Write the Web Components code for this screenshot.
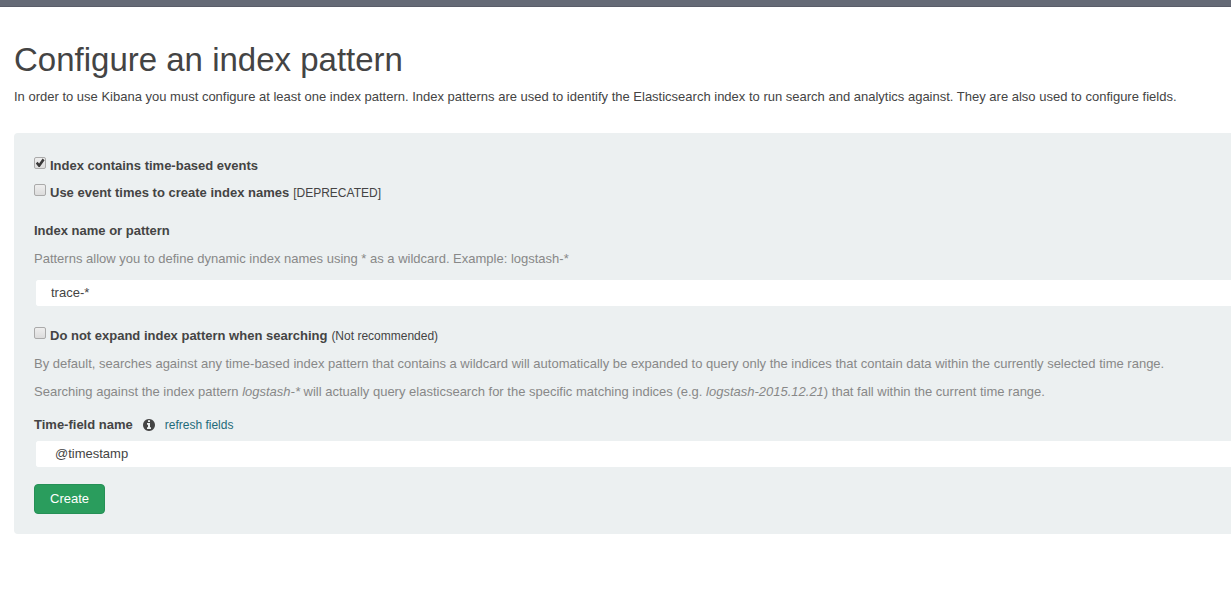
<!DOCTYPE html>
<html lang="en">
<head>
<meta charset="utf-8">
<meta name="viewport" content="width=device-width, initial-scale=1">
<title>Configure an index pattern</title>
<style>
  body { margin: 0; background: #fff; color: #444; font: 13px/18px "Liberation Sans", Arial, sans-serif; }
</style>
</head>
<body>
<index-page></index-page>

<template id="index-page">
  <style>
    :host { display: block; }
    .bar { height: 6px; background: #656a76; border-bottom: 1px solid #5a5d69; }
    main { padding: 32px 0 64px 14px; }
    h1 { margin: 0 0 7px; font-size: 33px; line-height: 42px; font-weight: 400; }
    .intro { margin: 0 0 27px; }
    form { display: flex; flex-direction: column; align-items: stretch; padding: 24px 0 20px 20px; background: #ecf0f1; border-radius: 4px 0 0 4px; }
    .checks { display: flex; flex-direction: column; gap: 9px; margin-bottom: 20px; }
    .expand { margin: 19px 0 15px; display: flex; flex-direction: column; gap: 10px; }
    button { align-self: flex-start; margin: 15px 0 0; height: 30px; padding: 0 15px; border: 1px solid #259056; border-radius: 4px; background: #2a9d5d; color: #fff; font: inherit; }
  </style>
  <header class="bar"></header>
  <main>
    <h1>Configure an index pattern</h1>
    <p class="intro">In order to use Kibana you must configure at least one index pattern. Index patterns are used to identify the Elasticsearch index to run search and analytics against. They are also used to configure fields.</p>
    <form>
      <div class="checks">
        <check-field checked>Index contains time-based events</check-field>
        <check-field>Use event times to create index names<span slot="note">[DEPRECATED]</span></check-field>
      </div>
      <text-field label="Index name or pattern" value="trace-*">
        <help-text>Patterns allow you to define dynamic index names using * as a wildcard. Example: logstash-*</help-text>
      </text-field>
      <div class="expand">
        <check-field>Do not expand index pattern when searching<span slot="note">(Not recommended)</span></check-field>
        <help-text>By default, searches against any time-based index pattern that contains a wildcard will automatically be expanded to query only the indices that contain data within the currently selected time range.</help-text>
        <help-text>Searching against the index pattern <em>logstash-*</em> will actually query elasticsearch for the specific matching indices (e.g. <em>logstash-2015.12.21</em>) that fall within the current time range.</help-text>
      </div>
      <time-field label="Time-field name" value="@timestamp"></time-field>
      <button type="button">Create</button>
    </form>
  </main>
</template>

<template id="check-field">
  <style>
    :host { display: block; }
    label { display: flex; align-items: flex-start; gap: 4px; }
    .text { font-weight: 700; }
    .note { font-size: 12px; }
    input { appearance: none; flex: none; box-sizing: border-box; width: 12px; height: 12px; margin: 0; border: 1px solid #aaa; border-radius: 2px; background: linear-gradient(#eee, #dcdcdc); display: grid; }
    input:checked::before { content: ""; width: 10px; height: 10px; background: #3a3a3a; clip-path: polygon(8% 54%, 25% 38%, 41% 55%, 76% 6%, 96% 22%, 48% 90%, 36% 90%); }
  </style>
  <label><input type="checkbox"><span class="text"><slot></slot></span><span class="note"><slot name="note"></slot></span></label>
</template>

<template id="help-text">
  <style>
    :host { display: block; color: #888; }
  </style>
  <slot></slot>
</template>

<template id="text-field">
  <style>
    :host { display: flex; flex-direction: column; gap: 10px; }
    label { font-weight: 700; }
    input { box-sizing: border-box; width: 100%; height: 30px; margin: 0; padding: 0 0 2px 15px; border: 2px solid #ecf0f1; border-right: 0; border-radius: 4px 0 0 4px; background: #fff; color: inherit; font: inherit; }
  </style>
  <label for="field"></label>
  <slot></slot>
  <input id="field" type="text">
</template>

<template id="time-field">
  <style>
    :host { display: flex; flex-direction: column; gap: 5px; }
    .head { display: flex; align-items: center; gap: 10px; }
    label { font-weight: 700; }
    svg { display: block; width: 12px; height: 12px; }
    a { color: #1f6b7a; font-size: 12px; text-decoration: none; }
    select { appearance: none; box-sizing: border-box; width: 100%; height: 30px; margin: 0; padding: 0 0 0 19px; border: 2px solid #ecf0f1; border-right: 0; border-radius: 4px 0 0 4px; background: #fff; color: inherit; font: inherit; }
  </style>
  <div class="head">
    <label for="field"></label>
    <svg viewBox="0 0 1536 1536" aria-hidden="true"><path fill="#444" d="M1024 1248v-160q0-14-9-23t-23-9h-96V544q0-14-9-23t-23-9H544q-14 0-23 9t-9 23v160q0 14 9 23t23 9h96v320h-96q-14 0-23 9t-9 23v160q0 14 9 23t23 9h448q14 0 23-9t9-23zM896 352V192q0-14-9-23t-23-9H672q-14 0-23 9t-9 23v160q0 14 9 23t23 9h192q14 0 23-9t9-23zm640 416q0 209-103 385.500T1153.500 1433 768 1536t-385.500-103T103 1153.500 0 768t103-385.500T382.500 103 768 0t385.500 103T1433 382.500 1536 768z"/></svg>
    <a href="#">refresh fields</a>
  </div>
  <select id="field"><option></option></select>
</template>

<script>
  class TemplateElement extends HTMLElement {
    constructor() {
      super();
      const template = document.getElementById(this.localName);
      this.attachShadow({ mode: "open" }).append(template.content.cloneNode(true));
    }
  }

  class CheckField extends TemplateElement {
    connectedCallback() {
      this.shadowRoot.querySelector("input").checked = this.hasAttribute("checked");
    }
  }

  class TextField extends TemplateElement {
    connectedCallback() {
      this.shadowRoot.querySelector("label").textContent = this.getAttribute("label");
      this.shadowRoot.querySelector("input").value = this.getAttribute("value");
    }
  }

  class TimeField extends TemplateElement {
    connectedCallback() {
      this.shadowRoot.querySelector("label").textContent = this.getAttribute("label");
      this.shadowRoot.querySelector("option").textContent = this.getAttribute("value");
    }
  }

  customElements.define("help-text", class extends TemplateElement {});
  customElements.define("check-field", CheckField);
  customElements.define("text-field", TextField);
  customElements.define("time-field", TimeField);
  customElements.define("index-page", class extends TemplateElement {});
</script>
</body>
</html>
